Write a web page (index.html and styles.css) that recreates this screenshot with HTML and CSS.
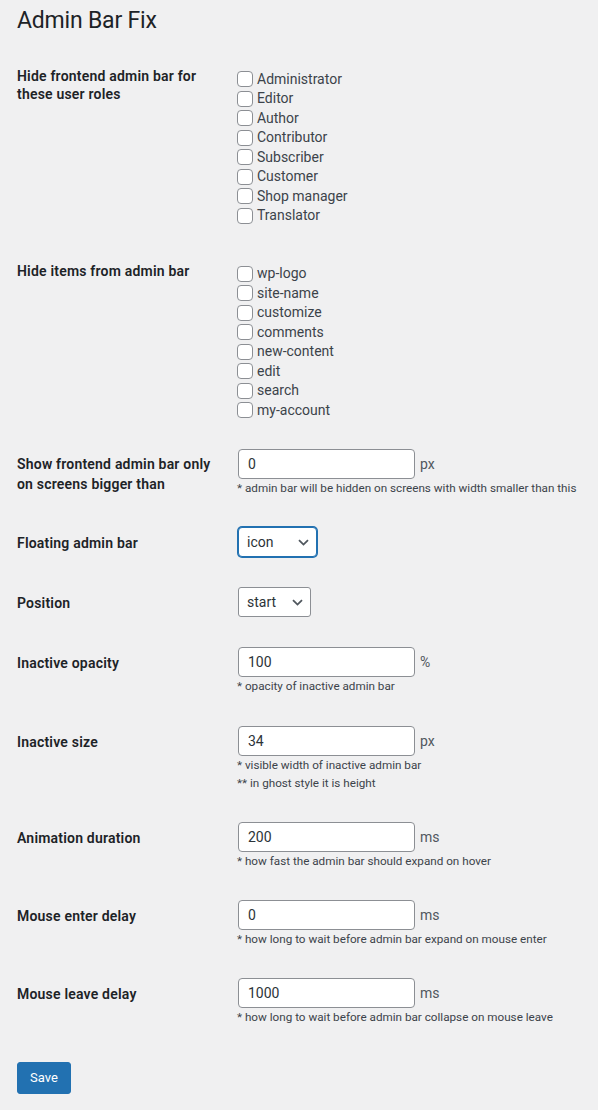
FILE: index.html
```html
<!DOCTYPE html>
<html lang="en">
<head>
<meta charset="utf-8">
<title>Admin Bar Fix</title>
<link rel="stylesheet" href="styles.css">
</head>
<body>
<div class="wrap">
  <h1 class="page-title">Admin Bar Fix</h1>
  <form class="settings">
    <div class="row">
      <div class="label">Hide frontend admin bar for these user roles</div>
      <div class="field field-list">
        <div class="checklist">
          <label class="check"><input type="checkbox"><span>Administrator</span></label>
          <label class="check"><input type="checkbox"><span>Editor</span></label>
          <label class="check"><input type="checkbox"><span>Author</span></label>
          <label class="check"><input type="checkbox"><span>Contributor</span></label>
          <label class="check"><input type="checkbox"><span>Subscriber</span></label>
          <label class="check"><input type="checkbox"><span>Customer</span></label>
          <label class="check"><input type="checkbox"><span>Shop manager</span></label>
          <label class="check"><input type="checkbox"><span>Translator</span></label>
        </div>
      </div>
    </div>

    <div class="row">
      <div class="label">Hide items from admin bar</div>
      <div class="field field-list">
        <div class="checklist">
          <label class="check"><input type="checkbox"><span>wp-logo</span></label>
          <label class="check"><input type="checkbox"><span>site-name</span></label>
          <label class="check"><input type="checkbox"><span>customize</span></label>
          <label class="check"><input type="checkbox"><span>comments</span></label>
          <label class="check"><input type="checkbox"><span>new-content</span></label>
          <label class="check"><input type="checkbox"><span>edit</span></label>
          <label class="check"><input type="checkbox"><span>search</span></label>
          <label class="check"><input type="checkbox"><span>my-account</span></label>
        </div>
      </div>
    </div>

    <div class="row">
      <div class="label label-tall">Show frontend admin bar only on screens bigger than</div>
      <div class="field">
        <div class="input-line"><input class="text-input" type="text" value="0"><span class="unit">px</span></div>
        <p class="note">* admin bar will be hidden on screens with width smaller than this</p>
      </div>
    </div>

    <div class="row">
      <div class="label">Floating admin bar</div>
      <div class="field">
        <div class="select-wrap select-focus">
          <select class="select select-icon"><option>icon</option></select>
          <svg class="chev" width="11" height="7" viewBox="0 0 11 7"><polyline points="1,1.2 5.5,5.6 10,1.2" fill="none" stroke="#50575e" stroke-width="1.8"/></svg>
        </div>
      </div>
    </div>

    <div class="row">
      <div class="label">Position</div>
      <div class="field">
        <div class="select-wrap">
          <select class="select select-start"><option>start</option></select>
          <svg class="chev" width="11" height="7" viewBox="0 0 11 7"><polyline points="1,1.2 5.5,5.6 10,1.2" fill="none" stroke="#50575e" stroke-width="1.8"/></svg>
        </div>
      </div>
    </div>

    <div class="row">
      <div class="label">Inactive opacity</div>
      <div class="field">
        <div class="input-line"><input class="text-input" type="text" value="100"><span class="unit">%</span></div>
        <p class="note">* opacity of inactive admin bar</p>
      </div>
    </div>

    <div class="row">
      <div class="label">Inactive size</div>
      <div class="field">
        <div class="input-line"><input class="text-input" type="text" value="34"><span class="unit">px</span></div>
        <p class="note">* visible width of inactive admin bar</p>
        <p class="note">** in ghost style it is height</p>
      </div>
    </div>

    <div class="row">
      <div class="label">Animation duration</div>
      <div class="field">
        <div class="input-line"><input class="text-input" type="text" value="200"><span class="unit">ms</span></div>
        <p class="note">* how fast the admin bar should expand on hover</p>
      </div>
    </div>

    <div class="row">
      <div class="label">Mouse enter delay</div>
      <div class="field">
        <div class="input-line"><input class="text-input" type="text" value="0"><span class="unit">ms</span></div>
        <p class="note">* how long to wait before admin bar expand on mouse enter</p>
      </div>
    </div>

    <div class="row">
      <div class="label">Mouse leave delay</div>
      <div class="field">
        <div class="input-line"><input class="text-input" type="text" value="1000"><span class="unit">ms</span></div>
        <p class="note">* how long to wait before admin bar collapse on mouse leave</p>
      </div>
    </div>

    <div class="actions">
      <button type="button" class="button-primary">Save</button>
    </div>
  </form>
</div>
</body>
</html>
```
FILE: styles.css
```css
html, body {
  margin: 0;
  padding: 0;
  background: #f0f0f1;
}

body {
  font-family: Roboto, "Liberation Sans", sans-serif;
  font-size: 14px;
  color: #3c434a;
}

.wrap {
  padding: 0 0 0 17px;
}

.page-title {
  margin: 0;
  padding: 6px 0 4px;
  font-size: 23px;
  line-height: 30px;
  font-weight: 400;
  letter-spacing: -0.2px;
  color: #1d2327;
}

.settings {
  margin-top: 5px;
}

.row {
  display: grid;
  grid-template-columns: 210px 1fr;
  align-items: start;
}

.label {
  padding: 22px 10px 0 0;
  font-size: 14px;
  font-weight: 600;
  line-height: 18.2px;
  letter-spacing: 0.2px;
  color: #1d2327;
}

.label-tall {
  line-height: 19.5px;
  padding-top: 21px;
}

.field {
  padding: 15px 10px;
}

.field-list {
  padding-bottom: 14px;
}

.checklist {
  margin-top: 9.6px;
  display: flex;
  flex-direction: column;
}

.check {
  display: flex;
  align-items: center;
  height: 19.5px;
  line-height: 19.5px;
  color: #3c434a;
}

.check input {
  appearance: none;
  -webkit-appearance: none;
  width: 16px;
  height: 16px;
  margin: 0 4px 0 0;
  border: 1px solid #8c8f94;
  border-radius: 4px;
  background: #fff;
  box-sizing: border-box;
  flex: none;
}

.input-line {
  display: flex;
  align-items: center;
  height: 30px;
}

.text-input {
  box-sizing: border-box;
  width: 177px;
  height: 30px;
  margin: 0 5px 0 1px;
  padding: 0 9px;
  border: 1px solid #8c8f94;
  border-radius: 4px;
  background: #fff;
  font-family: Roboto, "Liberation Sans", sans-serif;
  font-size: 14px;
  color: #2c3338;
  outline: none;
}

.unit {
  font-size: 14px;
  color: #50575e;
}

.note {
  margin: 0;
  font-size: 11.7px;
  line-height: 18.2px;
  color: #3c434a;
}

.select-wrap {
  position: relative;
  display: inline-block;
  margin-left: 1px;
  height: 30px;
  vertical-align: top;
}

.select {
  appearance: none;
  -webkit-appearance: none;
  box-sizing: border-box;
  height: 30px;
  margin: 0;
  padding: 0 24px 0 8px;
  border: 1px solid #8c8f94;
  border-radius: 3px;
  background: #fff;
  font-family: Roboto, "Liberation Sans", sans-serif;
  font-size: 14px;
  color: #2c3338;
  display: block;
}

.select-icon {
  width: 79px;
}

.select-start {
  width: 73px;
}

.select-focus .select {
  border-color: #2271b1;
  box-shadow: 0 0 0 1px #2271b1;
  border-radius: 4px;
}

.chev {
  position: absolute;
  right: 8px;
  top: 12px;
  pointer-events: none;
}

.actions {
  margin-top: 20px;
  padding-bottom: 16px;
}

.button-primary {
  box-sizing: border-box;
  height: 32px;
  padding: 0 12px;
  border: 1px solid #2271b1;
  border-radius: 3px;
  background: #2271b1;
  color: #fff;
  font-family: Roboto, "Liberation Sans", sans-serif;
  font-size: 13px;
  line-height: 30px;
  cursor: pointer;
}
```
